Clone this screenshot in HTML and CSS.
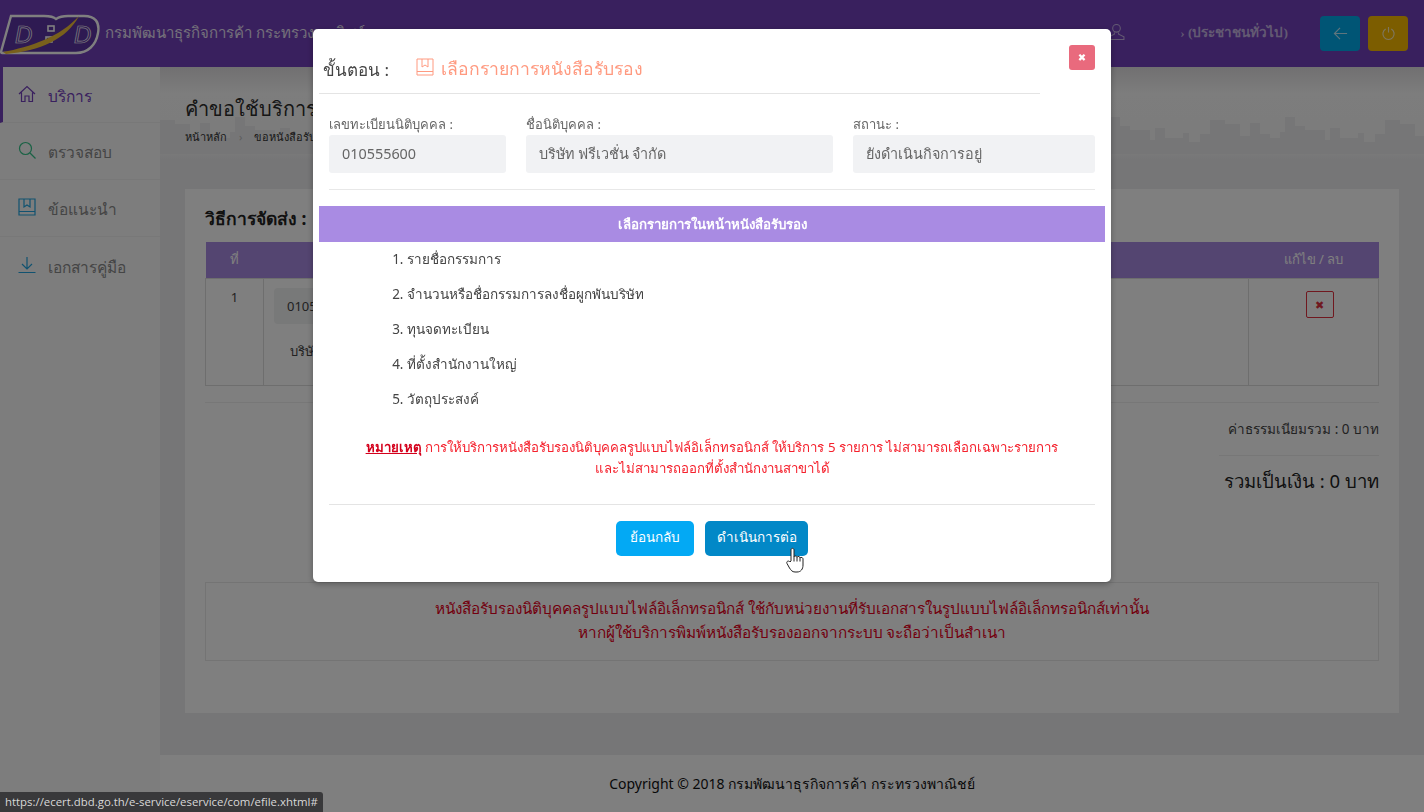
FILE: index.html
```html
<!DOCTYPE html>
<html>
    <head>
        <meta charset="UTF-8">
        <meta name="viewport" content="width=device-width, initial-scale=1.0">
        <title>DBD e-Service</title>
        <link rel="stylesheet" href="styles.css">
    </head>
    <body>
        <header class="topbar">
            <svg class="logo" viewBox="0 0 100 56" width="100" height="56">
                <path class="logo-shape" d="M11 9H44C50 9 54 10 56 12C59 10 62 9 68 9H84C95 9 100 15 98 26C96 38 88 46 76 46H2C1 46 1 45 1.5 43Z"/>
                <text x="15" y="36" class="logo-letter">D</text>
                <text x="74" y="36" class="logo-letter">D</text>
                <rect class="logo-dot" x="48" y="19" width="6" height="5"/>
                <rect class="logo-dot" x="46" y="30" width="6" height="5"/>
                <path class="logo-swoosh" d="M3 45C30 40 60 30 79 9C67 32 40 44 6 47Z"/>
            </svg>
            <p class="agency">กรมพัฒนาธุรกิจการค้า กระทรวงพาณิชย์</p>
            <div class="user">
                <svg class="user-icon" viewBox="0 0 16 16" width="17" height="17">
                    <circle cx="8" cy="5" r="3.6"/>
                    <path d="M6 9V10.5L1 13V15.5H15V13L10 10.5V9"/>
                </svg>
                <span class="user-name">› (ประชาชนทั่วไป)</span>
            </div>
            <div class="top-btn back-btn">
                <svg viewBox="0 0 16 16" width="15" height="15"><path d="M15 8H1.5M7.5 2L1.5 8L7.5 14"/></svg>
            </div>
            <div class="top-btn power-btn">
                <svg viewBox="0 0 16 16" width="15" height="15"><path d="M5 3.2A6 6 0 1 0 11 3.2M8 1V7"/></svg>
            </div>
        </header>

        <div class="layout">
            <nav class="sidebar">
                <a class="menu-item active">
                    <svg class="menu-icon icon-home" viewBox="0 0 18 18" width="18" height="18"><path d="M1 9L9 1.5L17 9M3.5 7.5V16.5H7V11H11V16.5H14.5V7.5"/></svg>
                    <span>บริการ</span>
                </a>
                <a class="menu-item">
                    <svg class="menu-icon icon-search" viewBox="0 0 18 18" width="18" height="18"><circle cx="7.5" cy="7.5" r="6"/><path d="M12 12L17.5 17.5"/></svg>
                    <span>ตรวจสอบ</span>
                </a>
                <a class="menu-item">
                    <svg class="menu-icon icon-book" viewBox="0 0 18 18" width="18" height="18"><path d="M1 1H17V17H1ZM1 13.5H17M6 1V9L9 7L12 9V1"/></svg>
                    <span>ข้อแนะนำ</span>
                </a>
                <a class="menu-item">
                    <svg class="menu-icon icon-down" viewBox="0 0 18 18" width="18" height="18"><path d="M9 1V12.5M4 8L9 13L14 8M0.5 16.5H17.5"/></svg>
                    <span>เอกสารคู่มือ</span>
                </a>
            </nav>

            <main class="main">
                <section class="page-head">
                    <svg class="skyline" width="1264" height="44">
                        <defs>
                            <pattern id="city" width="175" height="44" patternUnits="userSpaceOnUse">
                                <path d="M0 44V10H15V14H30V26H40V13H50V24H60V28H70V22H75V7H85V16H95V20H115V30H120V18H130V28H148V23H154V32H165V24H175V44Z"/>
                            </pattern>
                        </defs>
                        <rect width="1264" height="44" fill="url(#city)"/>
                    </svg>
                    <h1>คำขอใช้บริการ</h1>
                    <p class="crumbs">หน้าหลัก <span class="crumb-sep">›</span> ขอหนังสือรับรอง</p>
                </section>

                <section class="content">
                    <div class="card">
                        <h2>วิธีการจัดส่ง :</h2>
                        <table class="order-table">
                            <thead>
                                <tr>
                                    <th class="col-no">ที่</th>
                                    <th>รายการ</th>
                                    <th class="col-edit">แก้ไข / ลบ</th>
                                </tr>
                            </thead>
                            <tbody>
                                <tr>
                                    <td class="col-no">1</td>
                                    <td>
                                        <div class="row-id">010555600</div>
                                        <p class="row-name">บริษัท ฟรีเวชั่น จำกัด</p>
                                    </td>
                                    <td class="col-edit"><span class="del-btn">&#10006;</span></td>
                                </tr>
                            </tbody>
                        </table>
                        <div class="sums">
                            <p class="fee">ค่าธรรมเนียมรวม : 0 บาท</p>
                            <p class="total">รวมเป็นเงิน : 0 บาท</p>
                        </div>
                        <div class="warning">
                            <p>หนังสือรับรองนิติบุคคลรูปแบบไฟล์อิเล็กทรอนิกส์ ใช้กับหน่วยงานที่รับเอกสารในรูปแบบไฟล์อิเล็กทรอนิกส์เท่านั้น</p>
                            <p>หากผู้ใช้บริการพิมพ์หนังสือรับรองออกจากระบบ จะถือว่าเป็นสำเนา</p>
                        </div>
                    </div>
                </section>

                <footer class="footer">Copyright © 2018 กรมพัฒนาธุรกิจการค้า กระทรวงพาณิชย์</footer>
            </main>
        </div>

        <div class="overlay"></div>

        <div class="modal">
            <div class="modal-top">
                <div class="modal-title">
                    <span class="step">ขั้นตอน :</span>
                    <svg class="step-icon" viewBox="0 0 18 18" width="18" height="18"><path d="M1 1H17V17H1ZM1 13.5H17M6 1V9L9 7L12 9V1"/></svg>
                    <span class="step-name">เลือกรายการหนังสือรับรอง</span>
                </div>
                <span class="close-btn">&#10006;</span>
            </div>

            <div class="fields">
                <div class="field">
                    <label>เลขทะเบียนนิติบุคคล :</label>
                    <div class="input">010555600</div>
                </div>
                <div class="field">
                    <label>ชื่อนิติบุคคล :</label>
                    <div class="input">บริษัท ฟรีเวชั่น จำกัด</div>
                </div>
                <div class="field">
                    <label>สถานะ :</label>
                    <div class="input">ยังดำเนินกิจการอยู่</div>
                </div>
            </div>

            <div class="select-bar">เลือกรายการในหน้าหนังสือรับรอง</div>

            <ol class="pick-list">
                <li>รายชื่อกรรมการ</li>
                <li>จำนวนหรือชื่อกรรมการลงชื่อผูกพันบริษัท</li>
                <li>ทุนจดทะเบียน</li>
                <li>ที่ตั้งสำนักงานใหญ่</li>
                <li>วัตถุประสงค์</li>
            </ol>

            <div class="note">
                <p><span class="note-head">หมายเหตุ</span> การให้บริการหนังสือรับรองนิติบุคคลรูปแบบไฟล์อิเล็กทรอนิกส์ ให้บริการ 5 รายการ ไม่สามารถเลือกเฉพาะรายการ</p>
                <p>และไม่สามารถออกที่ตั้งสำนักงานสาขาได้</p>
            </div>

            <div class="actions">
                <a class="btn btn-back">ย้อนกลับ</a>
                <a class="btn btn-next">ดำเนินการต่อ</a>
                <svg class="hand" viewBox="0 0 18 26" width="18" height="26">
                    <path d="M5 14V3C5 0.8 8 0.8 8 3V10C8 8.5 11 8.5 11 10.5C11 9 14 9 14 11C14 10 17 10 17 12V18C17 22 15 25 11 25H9C6 25 5 23 3.5 21L1 16.5C0 14.5 2.5 13 4 15Z"/>
                    <path d="M8 10V14.5M11 10.5V14.5M14 11V14.5"/>
                </svg>
            </div>
        </div>

        <div class="status-url">https://ecert.dbd.go.th/e-service/eservice/com/efile.xhtml#</div>
    </body>
</html>
```

FILE: styles.css
```css
*{
    box-sizing: border-box;
    font-family: "Noto Sans", "Open Sans", "DejaVu Sans", sans-serif;
}

html, body{
    height: 100%;
}

body{
    margin: 0;
    height: 812px;
    overflow: hidden;
    display: flex;
    flex-direction: column;
    background-color: #f4f4f6;
}

p, h1, h2{
    margin: 0;
    font-weight: normal;
}

/* top bar */
.topbar{
    height: 67px;
    flex: none;
    display: flex;
    align-items: center;
    padding: 0 16px 0 0;
    background-color: #7340bd;
}

.logo{
    flex: none;
    align-self: flex-start;
    margin: 7px 5px 0 0;
}

.logo-shape{
    fill: #5c34a4;
    stroke: #fff;
    stroke-width: 2.4;
}

.logo-letter{
    font: italic 24px "Liberation Sans", sans-serif;
    fill: #5c34a4;
    stroke: #fff;
    stroke-width: 0.7;
}

.logo-dot{
    fill: none;
    stroke: #fff;
    stroke-width: 1.6;
}

.logo-swoosh{
    fill: #f0c038;
}

.agency{
    font-size: 15px;
    color: #e8e0f4;
    margin-top: -2px;
}

.user{
    margin-left: auto;
    display: flex;
    align-items: center;
    gap: 55px;
    margin-right: 32px;
    margin-top: -4px;
}

.user-icon{
    fill: none;
    stroke: #c6b4e4;
    stroke-width: 1;
}

.user-name{
    font-size: 13.5px;
    font-weight: bold;
    font-family: "Liberation Serif", serif;
    color: #c6b4e4;
}

.top-btn{
    width: 40px;
    height: 35px;
    border-radius: 4px;
    display: flex;
    align-items: center;
    justify-content: center;
    margin-top: -1px;
}

.top-btn svg{
    fill: none;
    stroke: rgba(255, 255, 255, 0.75);
    stroke-width: 1.2;
}

.back-btn{
    background-color: #00aaea;
    margin-right: 8px;
}

.power-btn{
    background-color: #f8ba00;
}

/* sidebar and page */
.layout{
    flex: 1;
    display: flex;
    min-height: 0;
}

.sidebar{
    width: 160px;
    flex: none;
    background-color: #fafafa;
}

.menu-item{
    height: 57px;
    display: flex;
    align-items: center;
    gap: 12px;
    padding: 3px 0 0 18px;
    font-size: 15.5px;
    color: #8a8a8a;
    border-bottom: 1px solid #f0f0f0;
}

.menu-item:first-child{
    height: 56px;
    border-left: 3px solid #7340bd;
    padding-left: 15px;
    color: #7340bd;
}

.menu-item:last-child{
    border-bottom: none;
}

.menu-icon{
    fill: none;
    stroke-width: 1.2;
    margin-top: -5px;
}

.icon-home{
    stroke: #7340bd;
}

.icon-search{
    stroke: #35c58a;
}

.icon-book, .icon-down{
    stroke: #22a5e0;
}

.main{
    flex: 1;
    min-width: 0;
    display: flex;
    flex-direction: column;
}

.page-head{
    position: relative;
    height: 93px;
    flex: none;
    padding: 26px 25px 0;
    background: linear-gradient(#e2e0e2, #fafafa 28%, #f8f8f8 88%, #ececee);
    overflow: hidden;
}

.skyline{
    position: absolute;
    left: 0;
    top: 43px;
    fill: #ececee;
}

.page-head h1{
    position: relative;
    font-size: 20px;
    color: #2c2c2c;
}

.crumbs{
    position: relative;
    font-size: 11px;
    color: #333;
    margin-top: 3px;
}

.crumb-sep{
    color: #bbb;
    margin: 0 9px;
}

.content{
    flex: 1;
    padding: 29px 25px 42px;
    background-color: #ececee;
}

.card{
    height: 524px;
    padding: 16px 20px 0;
    background-color: #fff;
}

.card h2{
    font-size: 17.5px;
    font-weight: bold;
    color: #222;
    height: 37px;
}

.order-table{
    width: 100%;
    border-collapse: collapse;
    font-size: 13px;
    color: #444;
}

.order-table th{
    height: 36px;
    background-color: #a98be3;
    color: #fff;
    font-weight: normal;
}

.order-table td{
    height: 107px;
    vertical-align: top;
    border: 1px solid #ddd;
    padding: 9px 10px;
}

.col-no{
    width: 58px;
    text-align: center;
}

.col-edit{
    width: 130px;
    text-align: center;
}

.row-id{
    width: 200px;
    height: 36px;
    line-height: 36px;
    padding-left: 13px;
    background-color: #f1f2f3;
    border-radius: 4px;
}

.row-name{
    margin: 17px 0 0 16px;
}

.del-btn{
    display: inline-block;
    width: 28px;
    height: 27px;
    line-height: 25px;
    margin: 3px 0 0 12px;
    border: 1px solid #e0303f;
    border-radius: 2px;
    color: #e0303f;
    font-size: 11px;
}

.sums{
    margin-top: 16px;
    border-top: 1px solid #eee;
    text-align: right;
}

.fee{
    width: 160px;
    margin: 0 0 0 auto;
    height: 53px;
    padding-top: 15px;
    font-size: 13.5px;
    white-space: nowrap;
    direction: rtl;
    color: #444;
    border-bottom: 1px solid #eee;
}

.total{
    margin-top: 11px;
    font-size: 18.5px;
    color: #222;
}

.warning{
    margin-top: 86px;
    height: 79px;
    padding-top: 13px;
    border: 1px solid #e8e8e8;
    text-align: center;
    font-size: 15.3px;
    line-height: 24px;
    color: #e60020;
}

.footer{
    height: 57px;
    flex: none;
    padding-top: 18px;
    text-align: center;
    font-size: 14px;
    color: #111;
    background-color: #fff;
}

.overlay{
    position: fixed;
    inset: 0;
    background-color: rgba(0, 0, 0, 0.5);
}

/* modal */
.modal{
    position: fixed;
    left: 313px;
    top: 29px;
    width: 798px;
    padding: 16px 6px 26px;
    border-radius: 5px;
    background-color: #fff;
    box-shadow: 0 2px 6px rgba(0, 0, 0, 0.3);
}

.modal-top{
    display: flex;
    align-items: flex-start;
    justify-content: space-between;
    padding-right: 10px;
}

.modal-title{
    width: 721px;
    height: 49px;
    display: flex;
    align-items: center;
    padding-left: 4px;
    border-bottom: 1px solid #e4e4e4;
}

.step{
    width: 93px;
    font-size: 17px;
    color: #444;
}

.step-icon{
    fill: none;
    stroke: #ff9a80;
    stroke-width: 1;
    margin: -4px 7px 0 0;
}

.step-name{
    font-size: 17.6px;
    color: #ff9a80;
}

.close-btn{
    width: 26px;
    height: 25px;
    line-height: 25px;
    text-align: center;
    border-radius: 3px;
    color: #fff;
    font-size: 10px;
    background-color: #e96a7d;
}

.fields{
    display: grid;
    grid-template-columns: 177px 307px 242px;
    gap: 20px;
    margin: 20px 10px 16px;
    padding-bottom: 16px;
    border-bottom: 1px solid #e8e8e8;
}

.field label{
    display: block;
    height: 21px;
    line-height: 20px;
    font-size: 13px;
    color: #666;
}

.input{
    height: 38px;
    line-height: 38px;
    padding-left: 13px;
    border-radius: 3px;
    font-size: 14.4px;
    color: #666;
    background-color: #f1f2f4;
}

.select-bar{
    height: 36px;
    line-height: 36px;
    text-align: center;
    font-size: 13.3px;
    font-weight: bold;
    color: #fff;
    background-color: #a98be3;
}

.pick-list{
    margin: 0;
    padding: 0 0 0 88px;
    font-size: 13.5px;
    color: #444;
}

.pick-list li{
    height: 35px;
    line-height: 35px;
}

.note{
    margin: 20px 10px 0;
    padding-bottom: 25px;
    border-bottom: 1px solid #e4e4e4;
    text-align: center;
    font-size: 13.25px;
    line-height: 21px;
    color: #f5202c;
}

.note-head{
    font-weight: bold;
    text-decoration: underline;
    color: #d4001c;
}

.actions{
    position: relative;
    display: flex;
    justify-content: center;
    gap: 11px;
    margin-top: 16px;
}

.btn{
    width: 78px;
    height: 35px;
    line-height: 33px;
    text-align: center;
    border-radius: 5px;
    font-size: 13.5px;
    font-weight: 500;
    color: #fff;
    background-color: #03a9f4;
}

.btn-next{
    width: 103px;
    background-color: #0288c7;
    white-space: nowrap;
}

.hand{
    position: absolute;
    left: 467px;
    top: 26px;
    fill: #fff;
    stroke: #222;
    stroke-width: 1;
}

.status-url{
    position: fixed;
    left: 0;
    bottom: 0;
    width: 323px;
    height: 20px;
    line-height: 20px;
    padding-left: 5px;
    border-top-right-radius: 3px;
    white-space: nowrap;
    font-family: "Open Sans", sans-serif;
    font-size: 11.4px;
    color: #d8d8d8;
    background-color: #39393b;
}
```
